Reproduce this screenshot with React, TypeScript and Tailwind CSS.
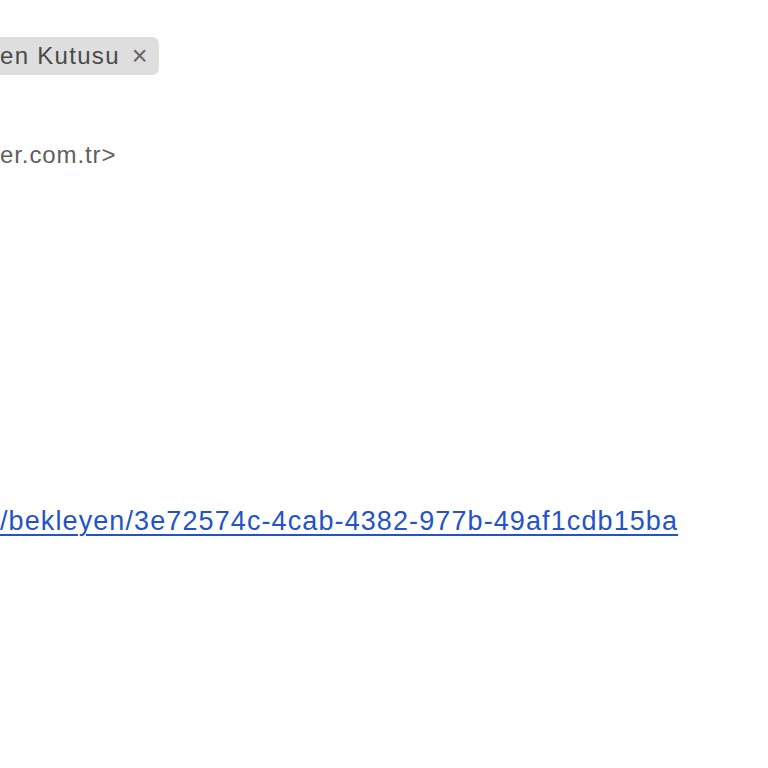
export default function App() {
  return (
    <div
      className="w-[768px] h-[768px] bg-white overflow-hidden"
      style={{ fontFamily: '"Liberation Sans", Arial, sans-serif' }}
    >
      <div className="pt-[37px]">
        <div className="inline-flex items-center h-[38px] bg-[#dedede] rounded-r-[7px] pr-[10px] text-[24px] tracking-[1.3px] text-[#4a4a4a]">
          <span>en Kutusu</span>
          <span className="ml-[12px] text-[27px] leading-none text-[#666666]">×</span>
        </div>
      </div>

      <div className="mt-[65px] text-[24px] leading-[30px] tracking-[0.9px] text-[#5f5f5f]">
        er.com.tr&gt;
      </div>

      <div className="mt-[336px] text-[27px] leading-[30px] tracking-[1.1px]">
        <a href="#" className="text-[#2453c8] underline underline-offset-[4px] decoration-[2px]">
          /bekleyen/3e72574c-4cab-4382-977b-49af1cdb15ba
        </a>
      </div>
    </div>
  );
}
